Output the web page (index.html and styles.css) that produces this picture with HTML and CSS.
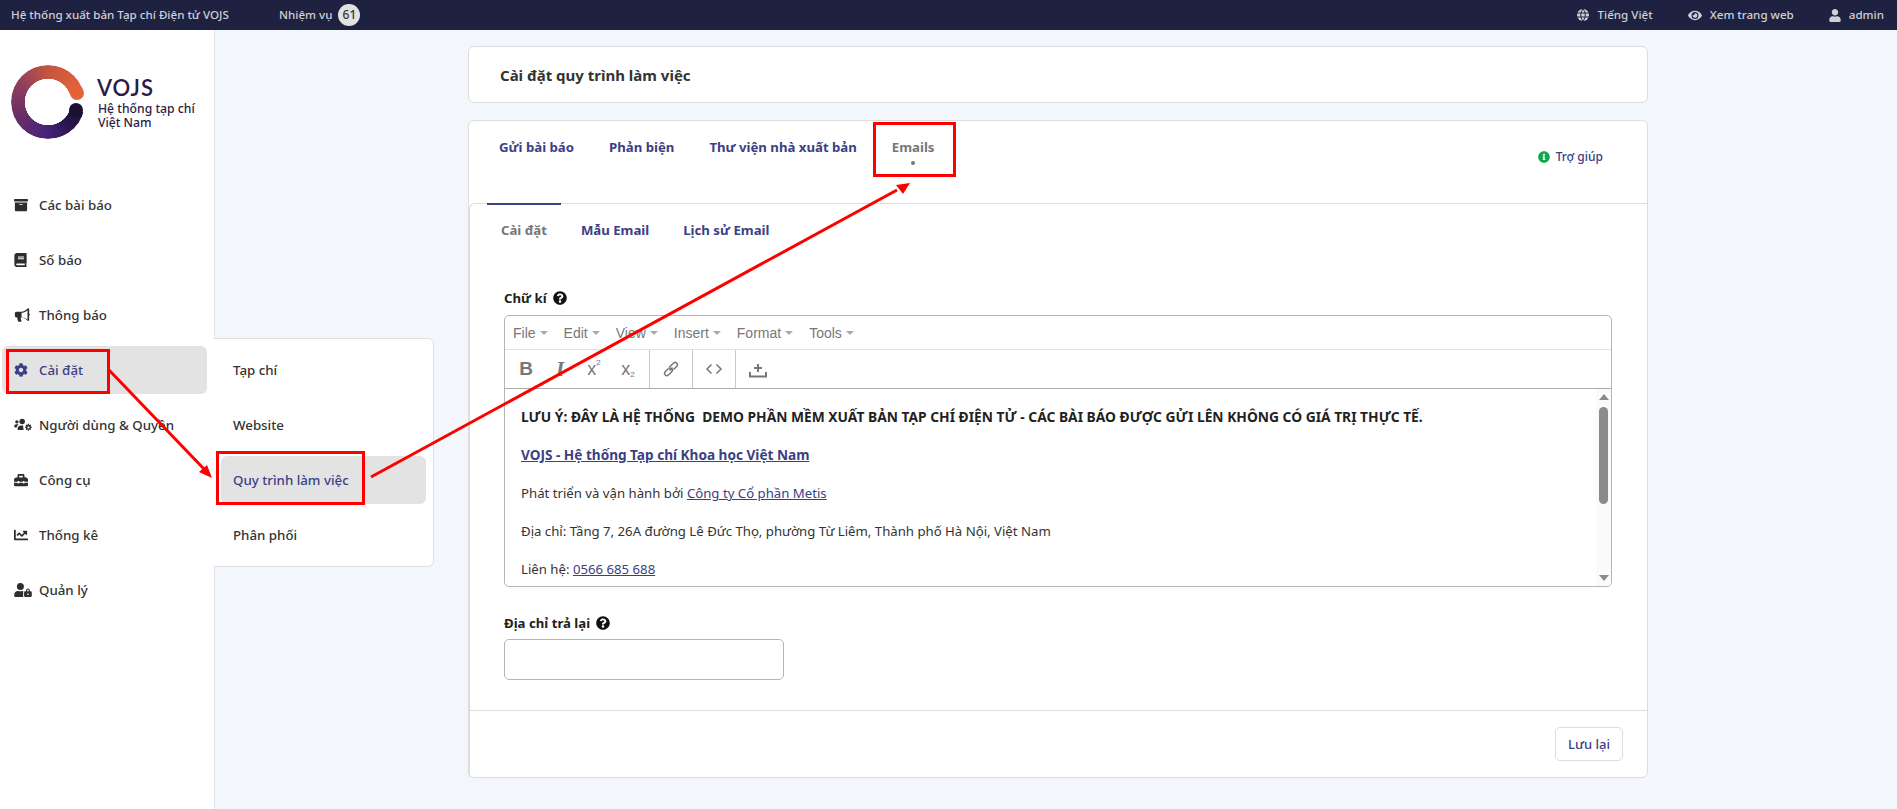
FILE: index.html
```html
<!DOCTYPE html>
<html lang="vi">
<head>
<meta charset="utf-8">
<title>VOJS</title>
<link rel="stylesheet" href="styles.css">
</head>
<body>
<svg class="defs" aria-hidden="true">
  <symbol id="i-archive" viewBox="0 0 512 512"><path d="M32 448c0 17.700 14.300 32 32 32h384c17.700 0 32-14.300 32-32V160H32v288zm160-212c0-6.600 5.400-12 12-12h104c6.600 0 12 5.400 12 12v8c0 6.600-5.400 12-12 12H204c-6.600 0-12-5.400-12-12v-8zM480 32H32C14.300 32 0 46.300 0 64v48c0 8.800 7.200 16 16 16h480c8.800 0 16-7.200 16-16V64c0-17.700-14.300-32-32-32z"/></symbol>
  <symbol id="i-book" viewBox="0 0 448 512"><path d="M448 360V24c0-13.300-10.700-24-24-24H96C43 0 0 43 0 96v320c0 53 43 96 96 96h328c13.300 0 24-10.700 24-24v-16c0-7.500-3.500-14.300-8.900-18.700-4.200-15.400-4.200-59.300 0-74.700 5.400-4.300 8.900-11.100 8.900-18.600zM128 134c0-3.300 2.700-6 6-6h212c3.300 0 6 2.700 6 6v20c0 3.300-2.700 6-6 6H134c-3.300 0-6-2.700-6-6v-20zm0 64c0-3.300 2.700-6 6-6h212c3.300 0 6 2.700 6 6v20c0 3.300-2.700 6-6 6H134c-3.300 0-6-2.700-6-6v-20zm253.400 250H96c-17.700 0-32-14.300-32-32 0-17.600 14.400-32 32-32h285.400c-1.900 17.100-1.900 46.900 0 64z"/></symbol>
  <symbol id="i-bullhorn" viewBox="0 0 608 512"><path d="M576 208V32c0-8.700-7-32-32-32-7.100 0-14.200 2.400-20 7l-85 68c-42.700 34.200-96.400 53-151 53H96c-35.300 0-64 28.700-64 64v96c0 35.300 28.700 64 64 64h33.700c-1.400 10.500-2.200 21.100-2.200 32 0 39.800 9.300 77.400 25.600 111 5.200 10.700 16.500 17 28.400 17h74.300c26.100 0 41.700-29.900 25.900-50.700-16.400-21.600-26.200-48.500-26.200-77.300 0-11.100 1.600-21.800 4.400-32H288c54.600 0 108.300 18.800 151 53l85 68c5.700 4.500 12.800 7 20 7 25 0 32-22.800 32-32V272c17.700 0 32-14.300 32-32s-14.300-32-32-32zm-64 229.400l-33-26.500c-54-43.200-121.800-67-191-67V168c69.200 0 137-23.800 191-67l33-26.400v362.800z"/></symbol>
  <symbol id="i-cog" viewBox="0 0 512 512"><path d="M487.400 315.700l-42.600-24.600c4.300-23.200 4.300-47 0-70.200l42.600-24.600c4.900-2.800 7.100-8.600 5.500-14-11.100-35.600-30-67.800-54.700-94.600-3.800-4.100-10-5.100-14.800-2.300L380.800 110c-17.900-15.400-38.500-27.300-60.800-35.100V25.800c0-5.600-3.900-10.500-9.400-11.700-36.700-8.200-74.300-7.800-109.200 0-5.500 1.200-9.400 6.100-9.400 11.700V75c-22.200 7.900-42.800 19.800-60.800 35.100L88.700 85.500c-4.900-2.800-11-1.900-14.800 2.300-24.700 26.700-43.600 58.900-54.700 94.600-1.700 5.400.6 11.200 5.500 14L67.300 221c-4.300 23.200-4.300 47 0 70.200l-42.600 24.600c-4.900 2.800-7.100 8.600-5.500 14 11.100 35.600 30 67.800 54.700 94.600 3.800 4.100 10 5.100 14.800 2.300l42.600-24.600c17.900 15.400 38.500 27.300 60.800 35.100v49.200c0 5.600 3.900 10.500 9.400 11.700 36.700 8.200 74.300 7.800 109.200 0 5.500-1.200 9.400-6.100 9.400-11.700v-49.200c22.200-7.900 42.800-19.800 60.800-35.100l42.600 24.600c4.900 2.800 11 1.900 14.800-2.300 24.700-26.700 43.600-58.900 54.700-94.600 1.500-5.500-.7-11.300-5.600-14.100zM256 336c-44.100 0-80-35.900-80-80s35.900-80 80-80 80 35.900 80 80-35.900 80-80 80z"/></symbol>
  <symbol id="i-users-cog" viewBox="0 0 640 512"><circle cx="96" cy="140" r="62"/><path d="M0 300c0-42 30-70 70-70h50c14 0 26 6 36 14-40 24-62 62-66 106H30c-16 0-30-14-30-30v-20z"/><circle cx="290" cy="130" r="100"/><path d="M120 400c0-70 50-130 120-130h40c20 0 34 3 48 8-6 26-4 50 6 74-6 30-2 62 14 90H160c-22 0-40-18-40-40v-2z"/><path fill-rule="evenodd" d="M505 210h30l8 36 22 10 30-20 24 24-20 30 10 22 31 8v34l-31 8-10 22 20 30-24 24-30-20-22 10-8 36h-34l-8-36-22-10-30 20-24-24 20-30-10-22-31-8v-34l31-8 10-22-20-30 24-24 30 20 22-10 8-36zM520 302a40 40 0 1 0 .1 0z"/></symbol>
  <symbol id="i-toolbox" viewBox="0 0 512 512"><path d="M502.600 214.600l-45.300-45.300c-6-6-14.100-9.400-22.600-9.400H384V80c0-26.500-21.500-48-48-48H176c-26.500 0-48 21.500-48 48v80H77.300c-8.500 0-16.600 3.400-22.600 9.400L9.400 214.600C3.400 220.600 0 228.700 0 237.200V320h128v-16c0-8.800 7.200-16 16-16h32c8.800 0 16 7.200 16 16v16h128v-16c0-8.800 7.200-16 16-16h32c8.800 0 16 7.200 16 16v16h128v-82.700c0-8.500-3.400-16.700-9.400-22.700zM320 160H192V96h128v64zm64 208c0 8.800-7.200 16-16 16h-32c-8.800 0-16-7.200-16-16v-16H192v16c0 8.800-7.200 16-16 16h-32c-8.800 0-16-7.200-16-16v-16H0v96c0 17.700 14.300 32 32 32h448c17.700 0 32-14.300 32-32v-96H384v16z"/></symbol>
  <symbol id="i-chart" viewBox="0 0 512 512"><path d="M496 384H64V80c0-8.840-7.160-16-16-16H16C7.160 64 0 71.160 0 80v336c0 17.670 14.330 32 32 32h464c8.840 0 16-7.160 16-16v-32c0-8.840-7.160-16-16-16zM464 96H345.940c-21.380 0-32.090 25.850-16.970 40.970l32.400 32.400L288 242.750l-73.370-73.370c-12.500-12.500-32.760-12.500-45.250 0l-68.690 68.690c-6.250 6.250-6.250 16.380 0 22.630l22.620 22.620c6.250 6.250 16.380 6.250 22.630 0L192 237.250l73.370 73.370c12.500 12.500 32.760 12.500 45.250 0l96-96 32.400 32.400c15.120 15.120 40.970 4.410 40.970-16.970V112c.01-8.840-7.150-16-16-16z"/></symbol>
  <symbol id="i-user-lock" viewBox="0 0 640 512"><circle cx="224" cy="128" r="128"/><path d="M0 422c0-74 60-134 134-134h17c22 10 47 16 73 16s51-6 73-16h17c6 0 12 0 17 1-3 8-5 16-5 25v173c0 10 2 18 6 25H48c-26 0-48-22-48-48v-42z"/><path fill-rule="evenodd" d="M430 270a70 70 0 0 1 140 0v30h25c25 0 45 20 45 45v122c0 25-20 45-45 45H405c-25 0-45-20-45-45V345c0-25 20-45 45-45h25v-30zm40 30h60v-30a30 30 0 0 0-60 0v30zm30 80a30 30 0 1 0 .1 0z"/></symbol>
  <symbol id="i-eye" viewBox="0 0 576 512"><path d="M572.520 241.400C518.290 135.590 410.930 64 288 64S57.680 135.640 3.480 241.410a32.350 32.350 0 0 0 0 29.190C57.710 376.410 165.070 448 288 448s230.320-71.640 284.520-177.410a32.350 32.350 0 0 0 0-29.190zM288 400a144 144 0 1 1 144-144 143.930 143.930 0 0 1-144 144zm0-240a95.310 95.310 0 0 0-25.310 3.790 47.850 47.850 0 0 1-66.900 66.900A95.780 95.780 0 1 0 288 160z"/></symbol>
  <symbol id="i-user" viewBox="0 0 448 512"><path d="M224 256c70.700 0 128-57.300 128-128S294.700 0 224 0 96 57.300 96 128s57.300 128 128 128zm89.600 32h-16.700c-22.200 10.200-46.900 16-72.900 16s-50.600-5.800-72.900-16h-16.700C60.200 288 0 348.200 0 422.400V464c0 26.500 21.500 48 48 48h352c26.500 0 48-21.500 48-48v-41.600c0-74.200-60.200-134.400-134.400-134.400z"/></symbol>
  <symbol id="i-question" viewBox="0 0 512 512"><path d="M504 256c0 136.997-111.043 248-248 248S8 392.997 8 256C8 119.083 119.043 8 256 8s248 111.083 248 248zM262.655 90c-54.497 0-89.255 22.957-116.549 63.758-3.536 5.286-2.353 12.415 2.715 16.258l34.699 26.310c5.205 3.947 12.621 3.008 16.665-2.122 17.864-22.658 30.113-35.797 57.303-35.797 20.429 0 45.698 13.148 45.698 32.958 0 14.976-12.363 22.667-32.534 33.976C247.128 238.528 216 254.941 216 296v4c0 6.627 5.373 12 12 12h56c6.627 0 12-5.373 12-12v-1.333c0-28.462 83.186-29.647 83.186-106.667 0-58.002-60.165-102-116.531-102zM256 338c-25.365 0-46 20.635-46 46 0 25.364 20.635 46 46 46s46-20.636 46-46c0-25.365-20.635-46-46-46z"/></symbol>
  <symbol id="i-info" viewBox="0 0 512 512"><path d="M256 8C119.043 8 8 119.083 8 256c0 136.997 111.043 248 248 248s248-111.003 248-248C504 119.083 392.957 8 256 8zm0 110c23.196 0 42 18.804 42 42s-18.804 42-42 42-42-18.804-42-42 18.804-42 42-42zm56 254c0 6.627-5.373 12-12 12h-88c-6.627 0-12-5.373-12-12v-24c0-6.627 5.373-12 12-12h12v-64h-12c-6.627 0-12-5.373-12-12v-24c0-6.627 5.373-12 12-12h64c6.627 0 12 5.373 12 12v100h12c6.627 0 12 5.373 12 12v24z"/></symbol>
</svg>

<header class="topbar">
  <span class="brand">Hệ thống xuất bản Tạp chí Điện tử VOJS</span>
  <span class="tasks">Nhiệm vụ <span class="badge">61</span></span>
  <nav class="top-right">
    <span class="top-link">
      <svg class="ic-globe" viewBox="0 0 14 14" fill="none" stroke="currentColor"><circle cx="7" cy="7" r="6" fill="currentColor" stroke="none"/><path class="globe-lines" d="M1 5h12M1 9h12M7 1c-3 3.500-3 8.500 0 12M7 1c3 3.500 3 8.500 0 12"/></svg>
      Tiếng Việt
    </span>
    <span class="top-link"><svg class="ic-eye"><use href="#i-eye"/></svg> Xem trang web</span>
    <span class="top-link"><svg class="ic-user"><use href="#i-user"/></svg> admin</span>
  </nav>
</header>

<div class="shell">
  <aside class="sidebar">
    <div class="logo">
      <div class="ring"><span class="cap cap-a"></span><span class="cap cap-b"></span></div>
      <div class="logo-text">
        <div class="logo-name">VOJS</div>
        <div class="logo-sub">Hệ thống tạp chí<br>Việt Nam</div>
      </div>
    </div>
    <ul class="menu">
      <li class="menu-item"><span class="menu-ic"><svg class="w14"><use href="#i-archive"/></svg></span>Các bài báo</li>
      <li class="menu-item"><span class="menu-ic"><svg class="w13"><use href="#i-book"/></svg></span>Số báo</li>
      <li class="menu-item"><span class="menu-ic"><svg class="w16"><use href="#i-bullhorn"/></svg></span>Thông báo</li>
      <li class="menu-item is-active"><span class="menu-ic"><svg class="w14"><use href="#i-cog"/></svg></span>Cài đặt</li>
      <li class="menu-item"><span class="menu-ic"><svg class="w17"><use href="#i-users-cog"/></svg></span>Người dùng &amp; Quyền</li>
      <li class="menu-item"><span class="menu-ic"><svg class="w14"><use href="#i-toolbox"/></svg></span>Công cụ</li>
      <li class="menu-item"><span class="menu-ic"><svg class="w14"><use href="#i-chart"/></svg></span>Thống kê</li>
      <li class="menu-item"><span class="menu-ic"><svg class="w17"><use href="#i-user-lock"/></svg></span>Quản lý</li>
    </ul>
  </aside>

  <ul class="flyout">
    <li class="fly-item">Tạp chí</li>
    <li class="fly-item">Website</li>
    <li class="fly-item is-active">Quy trình làm việc</li>
    <li class="fly-item">Phân phối</li>
  </ul>

  <main class="main">
    <section class="card title-card"><h1>Cài đặt quy trình làm việc</h1></section>

    <section class="card tabs-card">
      <div class="tabs">
        <a class="tab">Gửi bài báo</a>
        <a class="tab">Phản biện</a>
        <a class="tab">Thư viện nhà xuất bản</a>
        <a class="tab tab-current">Emails</a>
        <a class="help"><svg class="ic-info"><use href="#i-info"/></svg>Trợ giúp</a>
      </div>

      <div class="panel">
        <div class="subtabs">
          <a class="tab tab-current-plain">Cài đặt</a>
          <a class="tab">Mẫu Email</a>
          <a class="tab">Lịch sử Email</a>
        </div>

        <form class="form">
          <label class="label">Chữ kí <svg class="ic-q"><use href="#i-question"/></svg></label>
          <div class="editor">
            <div class="ed-menu">
              <span class="ed-m">File</span><span class="ed-m">Edit</span><span class="ed-m">View</span><span class="ed-m">Insert</span><span class="ed-m">Format</span><span class="ed-m">Tools</span>
            </div>
            <div class="ed-tools">
              <div class="ed-group g-format">
                <span class="ed-btn b-bold">B</span>
                <span class="ed-btn b-ital">I</span>
                <span class="ed-btn b-sc">x<sup>2</sup></span>
                <span class="ed-btn b-sc">x<sub>2</sub></span>
              </div>
              <div class="ed-group">
                <span class="ed-btn"><svg viewBox="0 0 18 18" class="ed-svg"><path d="M7.500 10.500l3-3M6.500 8.500l-3.500 3.500a2.300 2.300 0 0 0 3.200 3.200l3.500-3.500a2.300 2.300 0 0 0 0-3.200M11.500 9.500l3.500-3.500a2.300 2.300 0 0 0-3.200-3.200L8.300 6.300a2.300 2.300 0 0 0 0 3.200"/></svg></span>
              </div>
              <div class="ed-group">
                <span class="ed-btn"><svg viewBox="0 0 18 18" class="ed-svg"><path d="M6.500 4.500L2 9l4.500 4.500M11.500 4.500L16 9l-4.500 4.500"/></svg></span>
              </div>
              <div class="ed-group">
                <span class="ed-btn"><svg viewBox="0 0 18 18" class="ed-svg ed-up"><path d="M1 12v4.500h16V12M9 4v8M5 8h8"/></svg></span>
              </div>
            </div>
            <div class="ed-body">
              <div class="ed-content">
                <p><strong>LƯU Ý: ĐÂY LÀ HỆ THỐNG &nbsp;DEMO PHẦN MỀM XUẤT BẢN TẠP CHÍ ĐIỆN TỬ - CÁC BÀI BÁO ĐƯỢC GỬI LÊN KHÔNG CÓ GIÁ TRỊ THỰC TẾ.</strong></p>
                <p><a class="ed-link"><strong>VOJS - Hệ thống Tạp chí Khoa học Việt Nam</strong></a></p>
                <p>Phát triển và vận hành bởi <a class="ed-link">Công ty Cổ phần Metis</a></p>
                <p>Địa chỉ: Tầng 7, 26A đường Lê Đức Thọ, phường Từ Liêm, Thành phố Hà Nội, Việt Nam</p>
                <p>Liên hệ: <a class="ed-link">0566 685 688</a></p>
              </div>
              <div class="scroll">
                <span class="arrow-up"></span>
                <div class="scroll-track"><span class="scroll-thumb"></span></div>
                <span class="arrow-down"></span>
              </div>
            </div>
          </div>

          <label class="label label-2">Địa chỉ trả lại <svg class="ic-q"><use href="#i-question"/></svg></label>
          <input class="input" type="text">
        </form>

        <div class="footer"><button class="btn" type="button">Lưu lại</button></div>
      </div>
    </section>
  </main>
</div>

<svg class="marks" viewBox="0 0 1897 809" aria-hidden="true">
  <rect class="mark" x="7.500" y="350.500" width="101" height="42"/>
  <rect class="mark" x="217.500" y="452.500" width="146" height="51"/>
  <rect class="mark" x="874.500" y="123.500" width="80" height="52"/>
  <line class="mark-line" x1="109" y1="370" x2="204" y2="469"/>
  <polygon class="mark-head" points="212,478 199,472 207,465"/>
  <line class="mark-line" x1="371" y1="477" x2="897" y2="190"/>
  <polygon class="mark-head" points="910,183 903,194 896,185"/>
</svg>
</body>
</html>
```
FILE: styles.css
```css
* { box-sizing: border-box; }
html, body { margin: 0; padding: 0; height: 100%; }
body {
  width: 1897px;
  height: 809px;
  overflow: hidden;
  position: relative;
  background: #f3f6fb;
  color: #333;
  font: 500 13.300px/20px "Noto Sans", sans-serif;
}
ul { list-style: none; margin: 0; padding: 0; }
.defs { position: absolute; width: 0; height: 0; }
svg { fill: currentColor; display: block; }

/* top bar */
.topbar {
  height: 30px;
  background: #1e2240;
  color: #cfd0d8;
  display: flex;
  align-items: center;
  padding-left: 11px;
  font-size: 11.600px;
}
.brand { width: 268px; }
.tasks { display: flex; align-items: center; gap: 6px; }
.badge {
  width: 22px;
  height: 22px;
  border-radius: 50%;
  background: #e2e2e2;
  color: #333;
  display: flex;
  align-items: center;
  justify-content: center;
  font-size: 12px;
}
.top-right { margin-left: auto; display: flex; align-items: center; padding-right: 13px; gap: 35px; }
.top-link { display: flex; align-items: center; gap: 8px; }
.ic-globe { width: 14px; height: 14px; }
.globe-lines { stroke: #1e2240; stroke-width: 1; }
.ic-eye { width: 14px; height: 13px; }
.ic-user { width: 12px; height: 13px; }

/* layout */
.shell { display: flex; height: 779px; }
.sidebar {
  width: 215px;
  flex: none;
  background: #fff;
  border-right: 1px solid #e2e4ea;
  padding: 35px 7px 0 2px;
}

/* logo */
.logo { display: flex; height: 74px; margin: 0 0 42px 9px; }
.ring {
  width: 74px;
  height: 74px;
  position: relative;
  flex: none;
  border-radius: 50%;
}
.ring::before {
  content: "";
  position: absolute;
  inset: 0;
  border-radius: 50%;
  background: conic-gradient(#c2563f 0deg, #e8643a 72deg, transparent 74deg, transparent 105deg, #1c1030 107deg, #2a1550 140deg, #45227a 180deg, #6d2f66 250deg, #8d3d5e 300deg, #c2563f 360deg);
  -webkit-mask: radial-gradient(circle, transparent 23px, #000 23.500px);
  mask: radial-gradient(circle, transparent 23px, #000 23.500px);
}
.cap { position: absolute; width: 14px; height: 14px; border-radius: 50%; }
.cap-a { left: 59px; top: 21px; background: #e4623a; }
.cap-b { left: 58px; top: 38px; background: #1c1030; }
.logo-text { margin: 13px 0 0 12px; color: #2e1a47; }
.logo-name { font: 600 22px/20px Lato, sans-serif; letter-spacing: 1px; }
.logo-sub { font: 500 12.200px/14px "Noto Sans", sans-serif; margin: 4px 0 0 1px; }

/* menus */
.menu { display: flex; flex-direction: column; gap: 7px; }
.menu-item {
  height: 48px;
  display: flex;
  align-items: center;
  padding-left: 12px;
  border-radius: 6px;
  color: #333;
}
.menu-item.is-active { background: #e3e3e3; color: #3b4084; }
.menu-ic { width: 25px; flex: none; display: flex; align-items: center; color: #2d2d2d; }
.is-active .menu-ic { color: #3b4084; }
.w13 { width: 13px; height: 14px; }
.w14 { width: 14px; height: 14px; }
.w16 { width: 16px; height: 14px; }
.w17 { width: 18px; height: 14px; }

.flyout {
  position: absolute;
  left: 214px;
  top: 338px;
  width: 220px;
  height: 229px;
  background: #fff;
  border: 1px solid #e0e0e0;
  border-left: 0;
  border-radius: 0 6px 6px 0;
  padding: 7px 7px 0 7px;
  display: flex;
  flex-direction: column;
  gap: 7px;
}
.fly-item {
  height: 48px;
  display: flex;
  align-items: center;
  padding-left: 12px;
  border-radius: 6px;
}
.fly-item.is-active { background: #e3e3e3; color: #3b4084; }

/* main */
.main {
  flex: none;
  width: 1180px;
  margin-left: 253px;
  padding-top: 16px;
  display: flex;
  flex-direction: column;
  gap: 17px;
}
.card {
  background: #fff;
  border: 1px solid #ddd;
  border-radius: 6px;
}
.title-card { height: 57px; padding-left: 31px; display: flex; align-items: center; }
.title-card h1 { margin: 0; font: 700 15px/20px "Noto Sans", sans-serif; color: #333; }
.tabs-card { height: 658px; display: flex; flex-direction: column; }
.tabs { height: 82px; flex: none; display: flex; padding: 16px 0 0 30px; gap: 35px; }
.tab { color: #3b4084; font-weight: 700; font-size: 13.200px; height: 20px; }
.tab-current { color: #777; position: relative; }
.tab-current::after {
  content: "";
  position: absolute;
  left: 50%;
  top: 24px;
  width: 4px;
  height: 4px;
  margin-left: -2px;
  border-radius: 50%;
  background: #777;
}
.tab-current-plain { color: #777; }
.help { margin: 10px 44px 0 auto; display: flex; align-items: center; height: 20px; gap: 6px; color: #3b4084; font-size: 12px; font-weight: 500; }
.ic-info { width: 12px; height: 12px; color: #0bab4a; }

.panel {
  flex: 1;
  position: relative;
  border-top: 1px solid #ddd;
  border-left: 1px solid #ddd;
  border-radius: 6px 0 0 0;
  display: flex;
  flex-direction: column;
}
.panel::before {
  content: "";
  position: absolute;
  left: 17px;
  top: -1px;
  width: 74px;
  height: 2px;
  background: #3b4084;
}
.subtabs { display: flex; padding: 16px 0 0 31px; gap: 34px; }
.form { padding: 48px 0 0 34px; }
.label { display: flex; align-items: center; gap: 6px; height: 20px; font-weight: 700; font-size: 13.200px; color: #222; }
.ic-q { width: 14px; height: 14px; color: #111; }
.label-2 { margin-top: 26px; }

.editor {
  width: 1108px;
  height: 272px;
  margin: 7px 0 0 0;
  border: 1px solid #b5b5b5;
  border-radius: 5px;
  display: flex;
  flex-direction: column;
  overflow: hidden;
  font-weight: 400;
}
.ed-menu {
  height: 34px;
  flex: none;
  display: flex;
  align-items: center;
  padding-left: 8px;
  gap: 16px;
  border-bottom: 1px solid #e2e2e2;
  font: 400 14px/20px "Liberation Sans", sans-serif;
  color: #777;
}
.ed-m { display: flex; align-items: center; gap: 4px; }
.ed-m::after {
  content: "";
  border-top: 4px solid #aaa;
  border-left: 4px solid transparent;
  border-right: 4px solid transparent;
}
.ed-tools { height: 39px; flex: none; display: flex; border-bottom: 1px solid #a9a9a9; color: #777; }
.ed-group {
  width: 43px;
  display: flex;
  align-items: center;
  justify-content: center;
  border-right: 1px solid #c8c8c8;
}
.ed-group:last-child { border-right: 0; }
.g-format { width: 145px; padding: 0 4px; justify-content: flex-start; }
.ed-btn { width: 34px; display: flex; align-items: center; justify-content: center; font-family: "Liberation Sans", sans-serif; line-height: 20px; }
.b-bold { font-weight: 700; font-size: 19px; }
.b-ital { font: italic 700 21px/20px "Liberation Serif", serif; }
.b-sc { font-size: 18px; font-weight: 400; }
.b-sc sup, .b-sc sub { font-size: 8px; line-height: 8px; }
.b-sc sup { align-self: flex-start; }
.b-sc sub { align-self: flex-end; }
.ed-svg { width: 18px; height: 18px; fill: none; stroke: #777; stroke-width: 1.500; }
.ed-up { stroke-width: 2; }

.ed-body { flex: 1; display: flex; min-height: 0; }
.ed-content { flex: 1; padding: 18px 0 0 16px; overflow: hidden; font-size: 13.200px; color: #333; }
.ed-content p { margin: 0 0 18px; white-space: nowrap; }
.ed-content strong { font-weight: 700; font-size: 13.800px; color: #222; }
.ed-link { color: #3b4084; text-decoration: underline; }
.ed-link strong { color: #3b4084; font-size: 13.600px; }
.scroll {
  width: 15px;
  flex: none;
  background: #fafafa;
  display: flex;
  flex-direction: column;
  align-items: center;
  padding: 5px 0;
}
.arrow-up, .arrow-down { width: 0; height: 0; border-left: 5px solid transparent; border-right: 5px solid transparent; flex: none; }
.arrow-up { border-bottom: 6px solid #8b8b8b; }
.arrow-down { border-top: 6px solid #8b8b8b; }
.scroll-track { flex: 1; padding-top: 7px; }
.scroll-thumb { display: block; width: 9px; height: 97px; border-radius: 5px; background: #8b8b8b; }

.input {
  display: block;
  width: 280px;
  height: 41px;
  margin-top: 6px;
  border: 1px solid #b5b5b5;
  border-radius: 5px;
  background: #fff;
}
.footer {
  margin-top: auto;
  height: 67px;
  border-top: 1px solid #ddd;
  display: flex;
  justify-content: flex-end;
  padding: 16px 24px 0 0;
}
.btn {
  width: 68px;
  height: 34px;
  background: #fff;
  border: 1px solid #ddd;
  border-radius: 5px;
  color: #3b4084;
  font: 500 13px/20px "Noto Sans", sans-serif;
}

/* red annotations on top of the screenshot */
.marks { position: absolute; left: 0; top: 0; width: 1897px; height: 809px; pointer-events: none; }
.mark { fill: none; stroke: #f00; stroke-width: 3; }
.mark-line { stroke: #f00; stroke-width: 3; }
.mark-head { fill: #f00; }
```
